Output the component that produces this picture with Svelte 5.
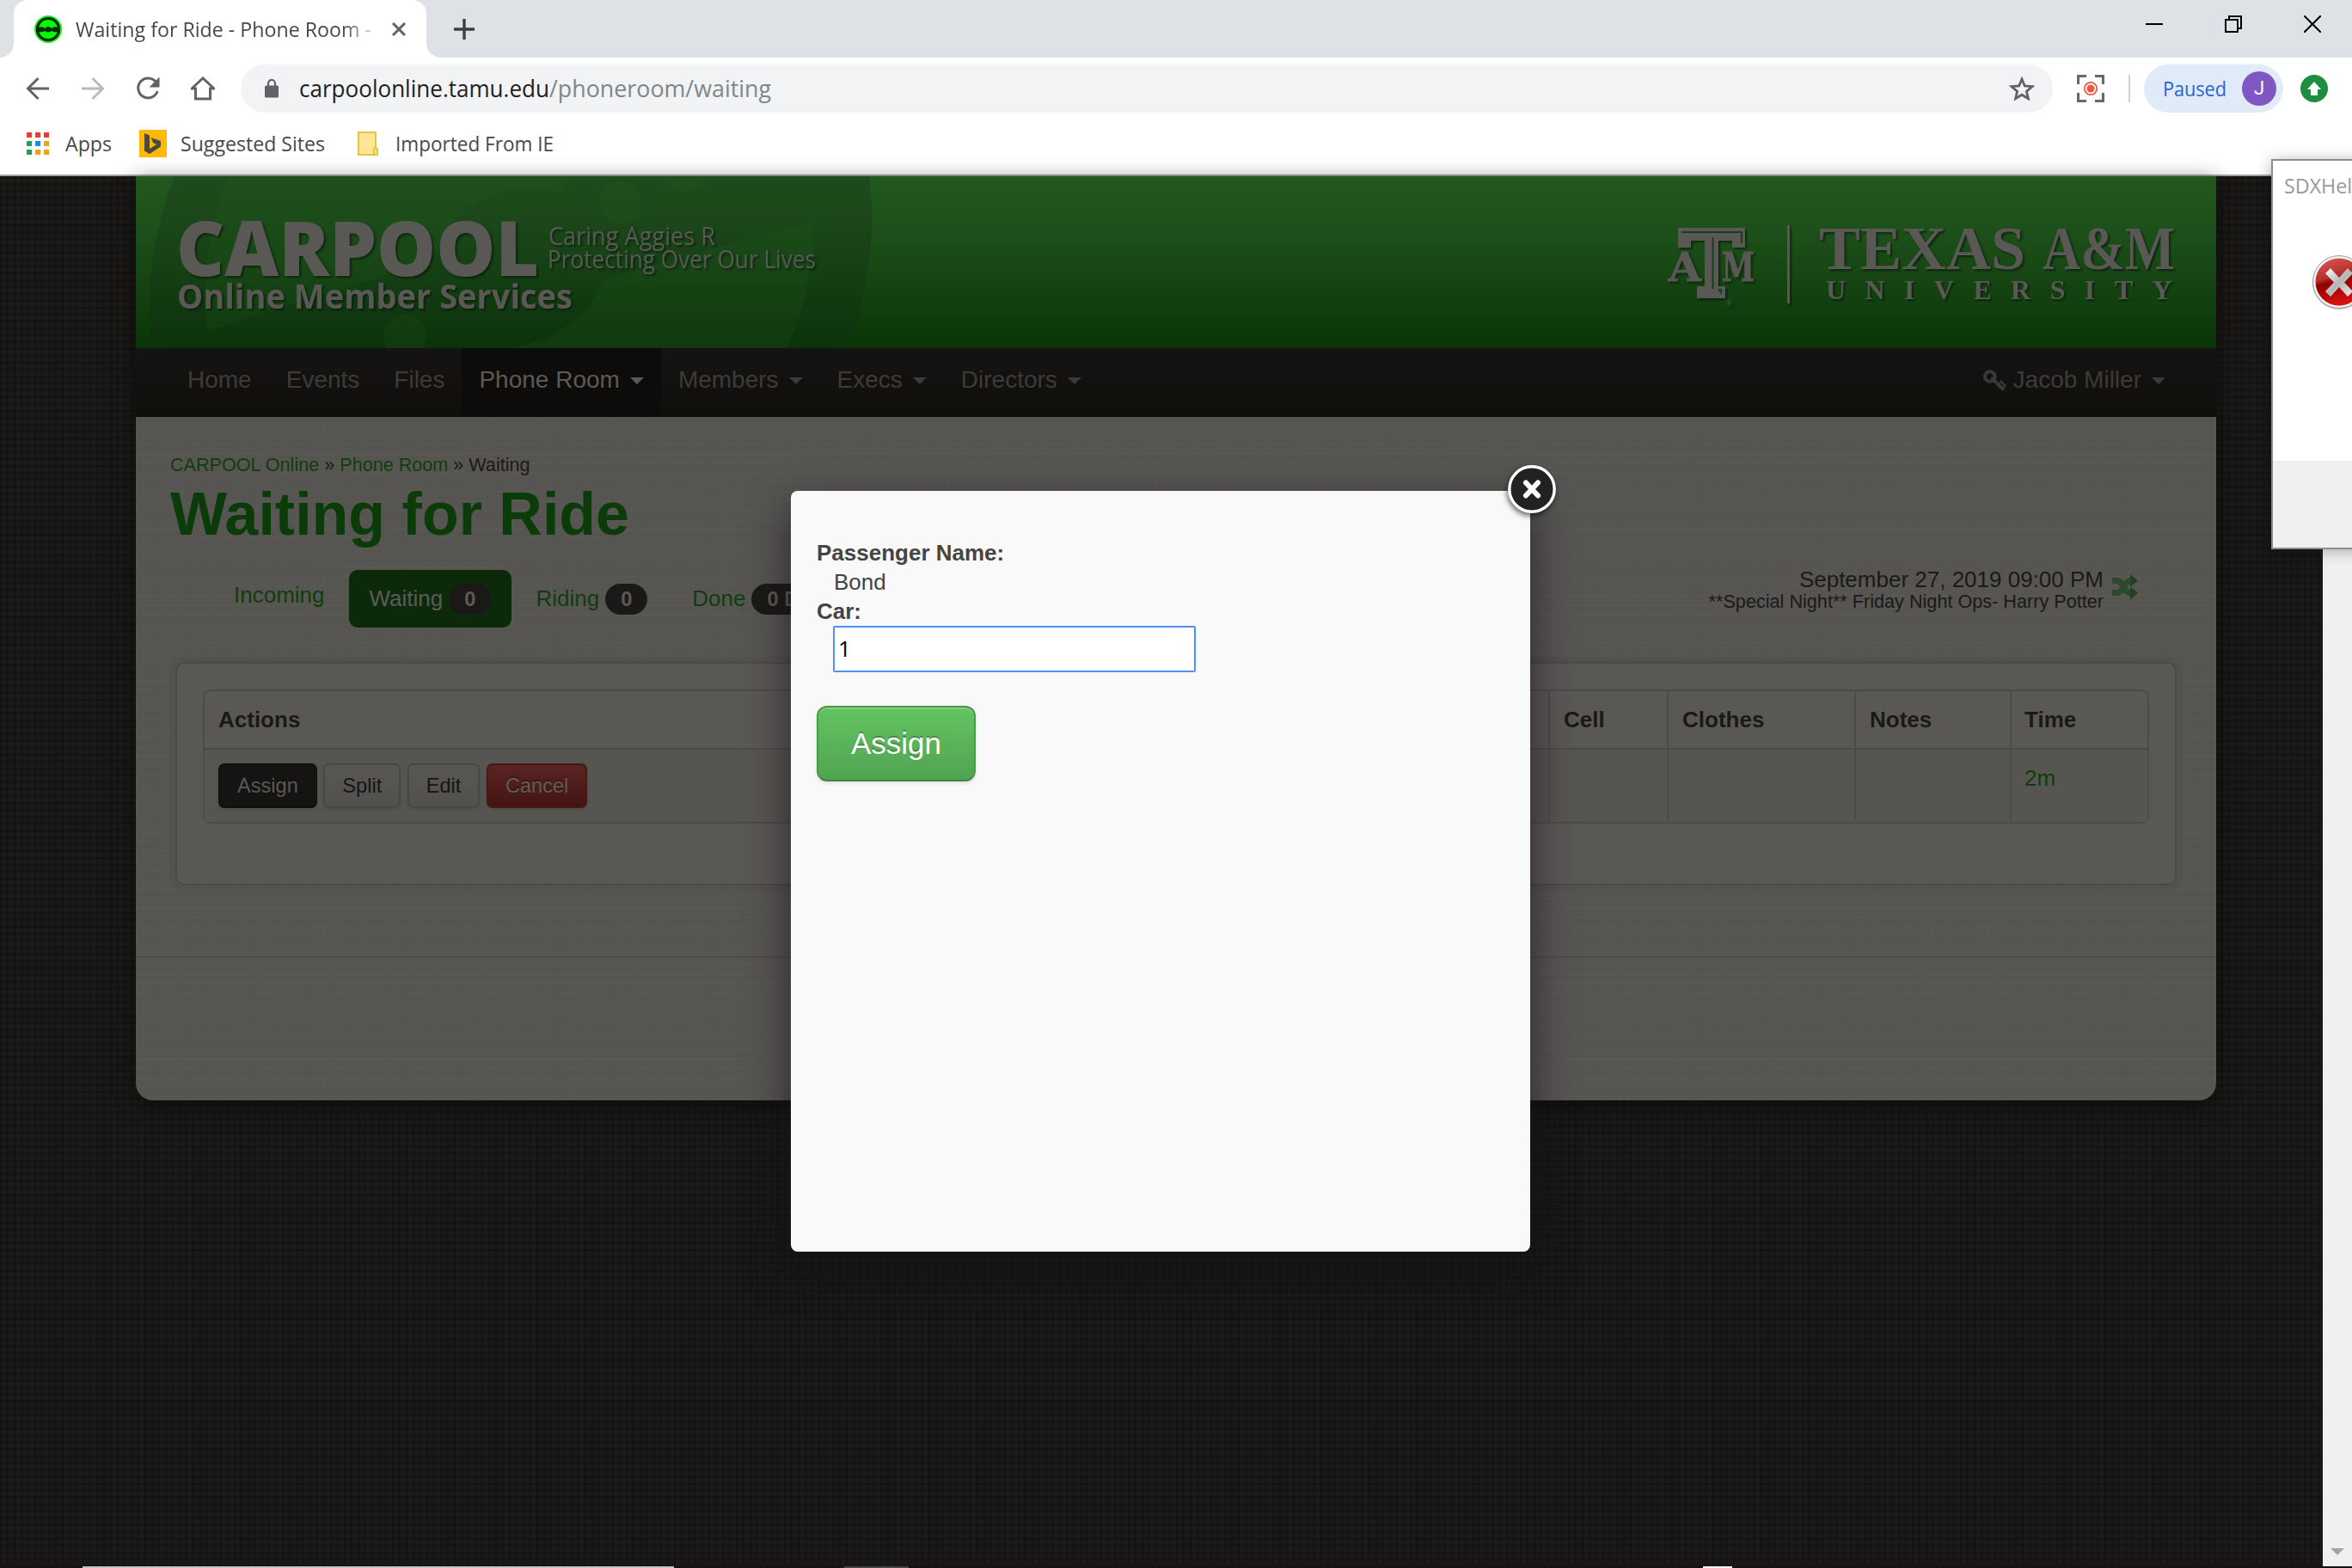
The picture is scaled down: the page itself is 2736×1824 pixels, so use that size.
<script>
  const nav = [
    { label: 'Home' },
    { label: 'Events' },
    { label: 'Files' },
    { label: 'Phone Room', menu: true, active: true },
    { label: 'Members', menu: true },
    { label: 'Execs', menu: true },
    { label: 'Directors', menu: true }
  ];
  const tabs = [
    { label: 'Incoming' },
    { label: 'Waiting', badge: '0', active: true },
    { label: 'Riding', badge: '0' },
    { label: 'Done', badge: '0 Done' }
  ];
  const columns = ['Actions', 'Cell', 'Clothes', 'Notes', 'Time'];
  const appDots = ['#f23a33', '#f23a33', '#f23a33', '#2b9a5b', '#1a8cff', '#f0a30a', '#2b9a5b', '#f0a30a', '#f0a30a'];
</script>

{#snippet fit(text, width, size, kind)}
  <svg class="fit {kind}" {width} height={size * 1.4}>
    <text x="0" y={size * 1.07} font-size={size * 0.965} textLength={width} lengthAdjust="spacingAndGlyphs">{text}</text>
  </svg>
{/snippet}

<div class="screen">
  <div class="tabstrip">
    <div class="browser-tab">
      <svg class="favicon" width="32" height="32" viewBox="0 0 32 32">
        <circle cx="16" cy="16" r="16" fill="#0f0" />
        <circle cx="16" cy="16" r="12.6" fill="none" stroke="#061a06" stroke-width="3" />
        <path d="M4 14q6-2 8 1q4-4 8 0q3-3 8-1v5q-6 1-8-1q-4 3-8 0q-3 2-8 1z" fill="#062b06" />
      </svg>
      <div class="tab-title">{@render fit('Waiting for Ride - Phone Room -', 344, 24, 'dark')}</div>
      <svg width="16" height="16" viewBox="0 0 16 16"><path d="M1 1l14 14M15 1L1 15" stroke="#5f6368" stroke-width="3" /></svg>
    </div>
    <svg class="new-tab" width="24" height="24" viewBox="0 0 24 24"><path d="M12 0v24M0 12h24" stroke="#3c4043" stroke-width="3.4" /></svg>
    <div class="window-controls">
      <svg width="20" height="20" viewBox="0 0 20 20"><path d="M0 10h20" stroke="#000" stroke-width="2" /></svg>
      <svg width="20" height="20" viewBox="0 0 20 20" fill="none" stroke="#000" stroke-width="2"><path d="M1 5h14v14H1zM5 5V1h14v14h-4" /></svg>
      <svg width="20" height="20" viewBox="0 0 20 20"><path d="M0 0l20 20M20 0L0 20" stroke="#000" stroke-width="2" /></svg>
    </div>
  </div>

  <div class="toolbar">
    <div class="nav-icons">
      <svg width="28" height="28" viewBox="0 0 28 28" fill="none" stroke="#5f6368" stroke-width="3"><path d="M27 14H3M14.500 2L2.500 14l12 12" /></svg>
      <svg width="28" height="28" viewBox="0 0 28 28" fill="none" stroke="#bababa" stroke-width="3"><path d="M1 14h24M13.500 2l12 12l-12 12" /></svg>
      <svg width="28" height="28" viewBox="0 0 28 28"><path d="M23.500 6.500A11.500 11.500 0 1 0 25.200 17" fill="none" stroke="#5f6368" stroke-width="3" /><path d="M27.500 0.500v12h-12z" fill="#5f6368" /></svg>
      <svg width="28" height="28" viewBox="0 0 28 28"><path d="M1 14L14 2l13 12h-4.500v12h-17V14z" fill="none" stroke="#5f6368" stroke-width="3" /></svg>
    </div>
    <div class="omnibox">
      <svg class="lock" width="16" height="22" viewBox="0 0 16 22"><path d="M4 8V5a4 4 0 0 1 8 0v3" fill="none" stroke="#5f6368" stroke-width="2.200" /><rect y="7.500" width="16" height="14" rx="1.500" fill="#5f6368" /></svg>
      {@render fit('carpoolonline.tamu.edu', 291, 28, 'black')}
      {@render fit('/phoneroom/waiting', 258, 28, 'grey')}
      <svg class="star" width="30" height="28" viewBox="0 0 30 28"><path d="M15 3l3.300 8l8.600.700l-6.500 5.600l2 8.400L15 21.200l-7.400 4.500l2-8.400l-6.500-5.600l8.600-.7z" fill="none" stroke="#5f6368" stroke-width="2.800" /></svg>
    </div>
    <svg class="record" width="32" height="32" viewBox="0 0 32 32">
      <path d="M1.500 11V1.500H11M21 1.500h9.500V11M30.500 21v9.500H21M11 30.500H1.500V21" fill="none" stroke="#696969" stroke-width="3.200" />
      <circle cx="16" cy="16" r="7.200" fill="none" stroke="#f05545" stroke-width="1.700" /><circle cx="16" cy="16" r="4.500" fill="#f05545" />
    </svg>
    <div class="separator"></div>
    <div class="profile">
      {@render fit('Paused', 74, 24, 'blue')}
      <div class="avatar">J</div>
    </div>
    <svg class="update" width="32" height="32" viewBox="0 0 32 32"><circle cx="16" cy="16" r="16" fill="#1e8e3e" /><path d="M16 8l8 9h-4v7h-8v-7H8z" fill="#fff" /></svg>
  </div>

  <div class="bookmarks">
    <div class="apps-grid">{#each appDots as color}<i style:background={color}></i>{/each}</div>
    {@render fit('Apps', 54, 24, 'dark apps-label')}
    <svg width="32" height="32" viewBox="0 0 32 32"><path fill="#ffb900" d="M0 0h32v32H0z" /><path d="M6 4l6 2.500V22l8-5l-4-2l-2.500-6L25 13v6.500L12 28l-6-3.500z" fill="#4a4a45" /></svg>
    {@render fit('Suggested Sites', 168, 24, 'dark sites-label')}
    <svg width="24" height="28" viewBox="0 0 24 28"><path d="M1 1h20v18l2 1v7H1z" fill="#ffe594" stroke="#e9c443" stroke-width="2" /><path d="M19 27v-7l2-1" fill="none" stroke="#e9c443" stroke-width="2" /></svg>
    {@render fit('Imported From IE', 184, 24, 'dark ie-label')}
  </div>

  <div class="viewport">
    <div class="desk">
      <div class="site">
        <header>
          <svg width="2420" height="200" viewBox="158 205 2420 200">
            <g class="wheel">
              <ellipse cx="594" cy="305" rx="441" ry="387" transform="rotate(-39.4 594 305)" fill="rgba(20,42,24,.26)" />
              <path class="hole" d="M265 205Q230 300 241 385L500 305L533 252C560 226 610 212 650 225Q656 213 672 205z" />
              <path class="hole" d="M947 257L700 325Q690 370 630 395Q612 401 590 405H916Q945 340 947 257z" />
              <circle class="hole" cx="722" cy="236" r="25" />
              <circle class="hole" cx="796" cy="198" r="26" />
              <circle class="hole" cx="471" cy="391" r="25" />
            </g>
            <g class="brand">
              <text x="205" y="321" font-size="88" font-weight="800" textLength="422" lengthAdjust="spacingAndGlyphs">CARPOOL</text>
              <text x="206" y="359" font-size="39" font-weight="700" textLength="460" lengthAdjust="spacingAndGlyphs">Online Member Services</text>
              <text x="638" y="285" font-size="30" textLength="194" lengthAdjust="spacingAndGlyphs">Caring Aggies R</text>
              <text x="637" y="312" font-size="30" textLength="312" lengthAdjust="spacingAndGlyphs">Protecting Over Our Lives</text>
            </g>
            <g class="tamu">
              <g class="slab">
                <text x="1941" y="327" font-size="46" textLength="38" lengthAdjust="spacingAndGlyphs">A</text>
                <text x="2003" y="327" font-size="46" textLength="38" lengthAdjust="spacingAndGlyphs">M</text>
              </g>
              <path d="M1952 265h78v23h-15v-8h-16v53h8v14h-33v-14h9v-53h-16v8h-15z" />
              <path d="M1956 270h70v13M1992.500 276v60M1999 336l3 4v-4" fill="none" stroke="#17401a" stroke-width="2" />
              <text x="2008" y="356" font-size="10">®</text>
              <path d="M2079 262h3v91h-3z" />
              <text x="2116" y="313" font-size="72" font-weight="700" textLength="240" lengthAdjust="spacingAndGlyphs">TEXAS</text>
              <text x="2376" y="313" font-size="72" font-weight="700" textLength="154" lengthAdjust="spacingAndGlyphs">A&amp;M</text>
              <text class="university" x="2124" y="348" font-size="32" font-weight="700">UNIVERSITY</text>
            </g>
          </svg>
        </header>

        <nav>
          {#each nav as item}
            <a class:active={item.active}>{item.label}{#if item.menu}<b class="caret"></b>{/if}</a>
          {/each}
          <a class="user">
            <svg width="27" height="26" viewBox="0 0 27 26"><circle cx="7.800" cy="8" r="5.800" fill="none" stroke="#3b3936" stroke-width="4" /><path d="M9.500 9.500L24 23.500" fill="none" stroke="#3b3936" stroke-width="4" /><path d="M18 17.500l3-4l2 2.500l3 3l-4 2.500" fill="none" stroke="#3b3936" stroke-width="2" /></svg>
            Jacob Miller<b class="caret"></b>
          </a>
        </nav>

        <main>
          <div class="crumbs"><a>CARPOOL Online</a> » <a>Phone Room</a> » Waiting</div>
          <h1>Waiting for Ride</h1>

          <div class="tab-row">
            <div class="pills">
              {#each tabs as tab}
                <div class="pill" class:active={tab.active} class:plain={!tab.badge}>
                  {tab.label}{#if tab.badge}<span class="badge">{tab.badge}</span>{/if}
                </div>
              {/each}
            </div>
            <div class="shift">
              <div class="shift-text">
                <div>September 27, 2019 09:00 PM</div>
                <small>**Special Night** Friday Night Ops- Harry Potter</small>
              </div>
              <svg width="32" height="30" viewBox="0 0 32 30"><g fill="none" stroke="#2c4a2b" stroke-width="7"><path d="M1 7.500h6q3 0 6 5l2 4q3 5 7 5h3" /><path d="M1 21.500h6q3 0 6-5l3-4q3-5 6-5h3" /></g><path d="M22 0l9 7.500l-9 7zM22 14.500l9 7l-9 8z" fill="#22401f" /></svg>
            </div>
          </div>

          <section class="panel">
            <div class="table">
              {#each columns as column}<div class="th">{column}</div>{/each}
              <div class="td actions">
                <button class="btn inverse">Assign</button>
                <button class="btn">Split</button>
                <button class="btn">Edit</button>
                <button class="btn danger">Cancel</button>
              </div>
              <div class="td"></div>
              <div class="td"></div>
              <div class="td"></div>
              <div class="td"><a>2m</a></div>
            </div>
          </section>
          <div class="rule"></div>
        </main>
      </div>
    </div>
    <div class="scrollbar"><svg width="16" height="8" viewBox="0 0 16 8"><path d="M0 0h16L8 8z" fill="#a3a3a3" /></svg></div>
  </div>

  <div class="taskbar"><i class="t1"></i><i class="t2"></i><i class="t3"></i></div>

  <div class="modal">
    <strong>Passenger Name:</strong>
    <div class="value">Bond</div>
    <strong>Car:</strong>
    <input value="1" />
    <button class="submit">Assign</button>
    <svg class="close" width="60" height="60" viewBox="0 0 60 60"><circle cx="30" cy="30" r="26.200" fill="#222" stroke="#fff" stroke-width="3.400" /><path d="M23 22.500l14 15M37 22.500L23 37.500" stroke="#fff" stroke-width="6" stroke-linecap="round" /></svg>
  </div>

  <div class="dialog">
    <div class="dialog-title">{@render fit('SDXHelper', 116, 24, 'muted')}</div>
    <svg width="64" height="66" viewBox="0 0 64 66">
      <defs>
        <linearGradient id="ball" x1="0" y1="0" x2="0.3" y2="1"><stop offset="0" stop-color="#e05a55" /><stop offset=".45" stop-color="#b5302c" /><stop offset=".55" stop-color="#8f0000" /><stop offset="1" stop-color="#d81010" /></linearGradient>
        <linearGradient id="steel" x1="0" y1="0" x2="1" y2="1"><stop offset="0" stop-color="#fff" /><stop offset=".5" stop-color="#b5b5b5" /><stop offset="1" stop-color="#eee" /></linearGradient>
      </defs>
      <circle cx="32" cy="33" r="31" fill="#aaa" opacity=".7" />
      <circle cx="32" cy="32" r="30.500" fill="#f4f4f4" stroke="#999" />
      <circle cx="32" cy="32" r="27.500" fill="url(#ball)" />
      <path d="M16 22l6-6l10 11l10-11l6 6l-10 10.500l10 10.500l-6 6l-10-11l-10 11l-6-6l10-10.500z" fill="url(#steel)" />
    </svg>
    <div class="dialog-foot"></div>
  </div>
</div>

<style>
  :global(body) { margin: 0; overflow: hidden; }
  .screen { position: relative; width: 2736px; height: 1824px; overflow: hidden; display: flex; flex-direction: column; background: #fff; font-family: "Liberation Sans", Arial, sans-serif; }
  svg { display: block; flex: none; }
  .fit { overflow: visible; font-family: "Open Sans", "Noto Sans", sans-serif; }
  .fit.dark { fill: #45494d; }
  .fit.black { fill: #202124; }
  .fit.grey { fill: #80868b; }
  .fit.blue { fill: #2565d2; }
  .fit.muted { fill: #999; }

  /* browser chrome */
  .tabstrip { height: 67px; flex: none; display: flex; align-items: center; background: #dee1e6; }
  .browser-tab { position: relative; width: 480px; height: 67px; margin-left: 16px; box-sizing: border-box; padding: 0 24px; display: flex; align-items: center; background: #fff; border-radius: 16px 16px 0 0; }
  .browser-tab::before, .browser-tab::after { content: ""; position: absolute; bottom: 0; width: 16px; height: 16px; }
  .browser-tab::before { left: -16px; background: radial-gradient(circle at 0 0, transparent 15.5px, #fff 16px); }
  .browser-tab::after { right: -16px; background: radial-gradient(circle at 100% 0, transparent 15.5px, #fff 16px); }
  .tab-title { width: 352px; margin: 0 16px 0 16px; -webkit-mask-image: linear-gradient(90deg, #000 310px, transparent 355px); mask-image: linear-gradient(90deg, #000 310px, transparent 355px); }
  .new-tab { margin-left: 32px; }
  .window-controls { margin: -11px 36px 0 auto; display: flex; gap: 72px; }
  .toolbar { height: 72px; flex: none; display: flex; align-items: center; }
  .nav-icons { display: flex; gap: 36px; margin: 0 30px; }
  .omnibox { width: 2108px; height: 56px; box-sizing: border-box; padding: 0 21px 0 28px; display: flex; align-items: center; background: #f1f3f4; border-radius: 28px; }
  .lock { margin-right: 24px; }
  .star { margin-left: auto; }
  .record { margin-left: 28px; }
  .separator { width: 2px; height: 32px; margin: 0 16px 0 28px; background: #d0d0d0; }
  .profile { width: 162px; height: 56px; box-sizing: border-box; padding: 0 8px 0 22px; display: flex; align-items: center; justify-content: space-between; background: #e1eaf9; border-radius: 28px; }
  .avatar { width: 40px; height: 40px; border-radius: 50%; background: #7e57c2; color: #fff; font: 22px/40px Roboto, sans-serif; text-align: center; }
  .update { margin-left: 20px; }
  .bookmarks { height: 64px; flex: none; padding: 0 0 8px 31px; box-sizing: border-box; display: flex; align-items: center; }
  .apps-grid { display: grid; grid-template-columns: repeat(3, 6px); grid-auto-rows: 6px; gap: 4px; margin-right: 19px; }
  .bookmarks :global(.apps-label) { margin-right: 32px; }
  .bookmarks :global(.sites-label) { margin: 0 38px 0 16px; }
  .bookmarks :global(.ie-label) { margin-left: 20px; }

  /* page */
  .viewport { height: 1617px; flex: none; display: flex; border-top: 2px solid #a5a3a3; }
  .desk { width: 2702px; box-sizing: border-box; padding-left: 158px; background-color: #1a1917; background-image: linear-gradient(rgba(14, 13, 12, .45) 2px, transparent 2px), linear-gradient(90deg, rgba(14, 13, 12, .35) 2px, transparent 2px); background-size: 8px 8px; }
  .site { width: 2420px; height: 1075px; border-radius: 0 0 20px 20px; box-shadow: 0 4px 24px rgba(0, 0, 0, .5); overflow: hidden; }
  header { height: 200px; background: linear-gradient(#22581f, #1b4d18 40%, #0a3508); }
  .hole { fill: rgba(36, 98, 32, .17); }
  .brand text { fill: #5a5855; font-family: "Open Sans", "Noto Sans", sans-serif; }
  .brand, .tamu { filter: drop-shadow(2px 2px 1px rgba(5, 18, 5, .6)); }
  .tamu { fill: #5a5855; font-family: "Liberation Serif", serif; }
  .slab { font-family: "DejaVu Serif", serif; font-weight: 700; stroke: #5a5855; stroke-width: 1px; }
  .university { letter-spacing: 22.400px; }
  nav { height: 80px; box-sizing: border-box; padding: 0 39px 0 40px; display: flex; background: linear-gradient(#161412, #100e0b); font-size: 28px; line-height: 74px; color: #3d3b38; }
  nav a { display: flex; padding: 0 20px; height: 80px; white-space: nowrap; }
  nav a.active { background: #0e0c0a; color: #5c5a57; }
  .caret { width: 0; height: 0; margin: 34px 0 0 12px; border: 8px solid transparent; border-top-color: currentColor; border-bottom: 0; }
  .user { margin-left: auto; }
  .user svg { margin: 25px 8px 0 0; }
  main { height: 795px; box-sizing: border-box; padding-top: 34px; background-color: #5a5855; background-image: linear-gradient(rgba(62, 60, 57, .08) 9px, transparent 9px), linear-gradient(90deg, rgba(62, 60, 57, .05) 9px, transparent 9px); background-size: 11px 11px; color: #1b1918; }
  main a { color: #103d0d; }
  .crumbs { margin-left: 40px; font-size: 21.600px; line-height: 43px; }
  h1 { margin: 0 0 29px 40px; font-size: 70px; line-height: 72px; color: #0b3b08; }
  .tab-row { height: 68px; display: flex; justify-content: space-between; padding: 0 90px 0 90px; font-size: 26px; }
  .pills { display: flex; gap: 4px; }
  .pill { height: 67px; padding: 0 24px; display: flex; align-items: center; border-radius: 10px; color: #103d0d; white-space: nowrap; }
  .pill.plain { height: 59px; }
  .pill.active { background: #0c2a0a; color: #5c5a57; }
  .badge { margin-left: 7px; padding: 0 18px; border-radius: 18px; background: #1b1918; color: #5c5a57; font-size: 23.700px; font-weight: 700; line-height: 36px; }
  .shift { display: flex; gap: 9px; line-height: 26px; text-align: right; margin-top: -2px; }
  .shift small { display: block; font-size: 21.650px; line-height: 25px; }
  .shift svg { margin-top: 7px; }
  .panel { width: 2328px; height: 260px; box-sizing: border-box; margin: 39px 0 0 46px; padding: 30px; border: 2px solid #4b4946; border-radius: 10px; background: #5a5855; box-shadow: 0 0 0 6px rgba(70, 68, 65, .2); }
  .table { height: 156px; box-sizing: border-box; display: grid; grid-template: 68px 84px / 1fr 138px 218px 181px 160px; border: 2px solid #4d4b48; border-radius: 8px; font-size: 26px; }
  .th, .td { box-sizing: border-box; padding: 0 16px; border-left: 2px solid #4d4b48; }
  .th { font-weight: 700; line-height: 66px; border-bottom: 2px solid #4d4b48; }
  .td { padding-top: 16px; line-height: 34px; background: #575552; }
  .th:last-child, .td:last-child, .th:nth-child(5) { padding-left: 15px; }
  .th:first-child, .actions { border-left: 0; padding-left: 16px; }
  .actions { display: flex; gap: 7.500px; }
  .btn { height: 52px; box-sizing: border-box; padding: 0 20px; border: 2px solid #494744; border-radius: 7px; font: 23.600px/46px "Liberation Sans", Arial, sans-serif; color: #161413; background: linear-gradient(#5a5855, #51504d); box-shadow: 0 2px 3px rgba(60, 58, 55, .3); }
  .inverse { color: #5a5855; background: #161412; border-color: #11100e; }
  .danger { color: #5f5d5a; background: linear-gradient(#5a2422, #431512); border-color: #451815; text-shadow: 0 -2px 0 rgba(30, 8, 8, .4); }
  .rule { height: 2px; margin-top: 82px; background: #4e4c49; }
  .scrollbar { flex: 1; display: flex; justify-content: center; align-items: flex-end; background: #f0f0f0; padding-bottom: 13px; }
  .taskbar { height: 2px; flex: none; display: flex; background: #191214; }
  .t1 { width: 688px; margin-left: 96px; background: #c3c3c3; }
  .t2 { width: 75px; margin-left: 198px; background: #484646; }
  .t3 { width: 34px; margin-left: 924px; background: #f2f0f0; }

  /* assignment lightbox */
  .modal { position: absolute; left: 920px; top: 571px; width: 860px; height: 885px; box-sizing: border-box; padding: 55px 30px; border-radius: 8px; background: #f9f9f9; box-shadow: 0 20px 50px rgba(20, 16, 20, .7); font-size: 26px; line-height: 34px; color: #444; }
  .modal strong { display: block; }
  .value { margin-left: 20px; }
  input { display: block; width: 422px; height: 54px; box-sizing: border-box; margin: 0 0 0 19px; padding: 0 4px 3px; border: 2px solid #4d90fe; border-radius: 2px; outline: 0; background: #fff; color: #000; font: 26px "Open Sans", "Noto Sans", sans-serif; }
  .submit { display: block; width: 185px; height: 88px; margin-top: 39px; padding: 0 0 1px; border: 2px solid #4b9a4b; border-bottom-color: #3f8540; border-radius: 12px; background: linear-gradient(#62c462, #51a351); box-shadow: inset 0 2px 0 rgba(255, 255, 255, .2), 0 2px 4px rgba(0, 0, 0, .1); color: #fff; font: 35px "Liberation Sans", Arial, sans-serif; text-shadow: 0 -2px 0 rgba(0, 0, 0, .25); }
  .close { position: absolute; right: -32px; top: -32px; filter: drop-shadow(-1px 3px 3px rgba(0, 0, 0, .6)); }

  /* system dialog hanging off the right edge */
  .dialog { position: absolute; left: 2642px; top: 185px; width: 120px; height: 454px; box-sizing: border-box; border: 2px solid #8c8c8c; background: #fff; box-shadow: 0 2px 16px rgba(0, 0, 0, .3); display: flex; flex-direction: column; overflow: hidden; }
  .dialog > svg { margin: 69px 0 0 45px; }
  .dialog-title { padding: 12px 0 0 13px; height: 28px; }
  .dialog-foot { margin-top: auto; height: 101px; background: #f0f0f0; }
</style>
